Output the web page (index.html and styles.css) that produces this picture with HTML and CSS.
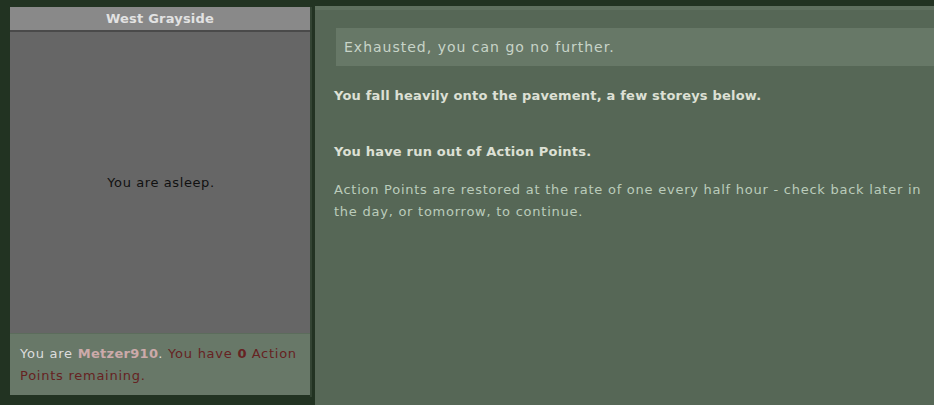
FILE: index.html
```html
<!DOCTYPE html>
<html>
  <head>
    <meta charset="utf-8" />
    <title>Urban Dead</title>
    <meta name="viewport" content="width=device-width, initial-scale=1.0" />
    <link rel="stylesheet" href="styles.css">
  </head>
  <body>
    <div class="page">
      <div class="side">
        <div class="loc">West Grayside</div>
        <div class="view">You are asleep.</div>
        <div class="status"><span class="you">You are </span><b class="name">Metzer910</b><span class="you">.</span> You have <b>0</b> Action Points remaining.</div>
      </div>
      <div class="main">
        <div class="msg">Exhausted, you can go no further.</div>
        <p class="bold">You fall heavily onto the pavement, a few storeys below.</p>
        <p class="bold gap">You have run out of Action Points.</p>
        <p>Action Points are restored at the rate of one every half hour - check back later in the day, or tomorrow, to continue.</p>
      </div>
    </div>
  </body>
</html>
```

FILE: styles.css
```css
html, body {
  margin: 0;
  height: 100%;
  background-color: #223322;
  font-family: "DejaVu Sans", sans-serif;
  font-size: 13px;
  letter-spacing: 0.75px;
  overflow: hidden;
}

b {
  letter-spacing: 0.3px;
}

.page {
  display: flex;
  gap: 3px;
  padding: 6px 0 0 10px;
  height: 100%;
  box-sizing: border-box;
}

.side {
  width: 300px;
  flex: none;
  margin-top: 1px;
  display: flex;
  flex-direction: column;
  border-right: 2px solid #334433;
  height: 390px;
}

.loc {
  background-color: #898989;
  color: #e2e2e2;
  font-weight: bold;
  letter-spacing: 0.2px;
  text-align: center;
  height: 23px;
  line-height: 23px;
  border-bottom: 2px solid #4a4a4a;
}

.view {
  background-color: #666666;
  color: #111111;
  letter-spacing: 0.6px;
  height: 301px;
  display: flex;
  align-items: center;
  justify-content: center;
  padding-left: 2px;
  box-sizing: border-box;
}

.status {
  background-color: #687868;
  color: #662222;
  border-top: 1px solid #5c6c5c;
  padding: 9px 1px 8px 10px;
  line-height: 22px;
}

.you {
  color: #dddddd;
}

.name {
  color: #ccaaaa;
}

.main {
  flex: 1;
  background-color: #566756;
  border-top: 4px solid #5f705f;
  padding: 18px 4px 0 19px;
  color: #bbccbb;
}

.msg {
  background-color: #677867;
  margin-left: 2px;
  margin-right: -4px;
  height: 38px;
  line-height: 38px;
  padding-left: 8px;
  font-size: 14px;
  letter-spacing: 1px;
  color: #c8d4c8;
}

.main p {
  margin: 0;
  line-height: 22px;
}

.main p.bold {
  font-weight: bold;
  letter-spacing: 0.2px;
  color: #dde0d5;
  margin-top: 19px;
}

.main p.gap {
  margin-top: 34px;
  margin-bottom: 16px;
}
```
